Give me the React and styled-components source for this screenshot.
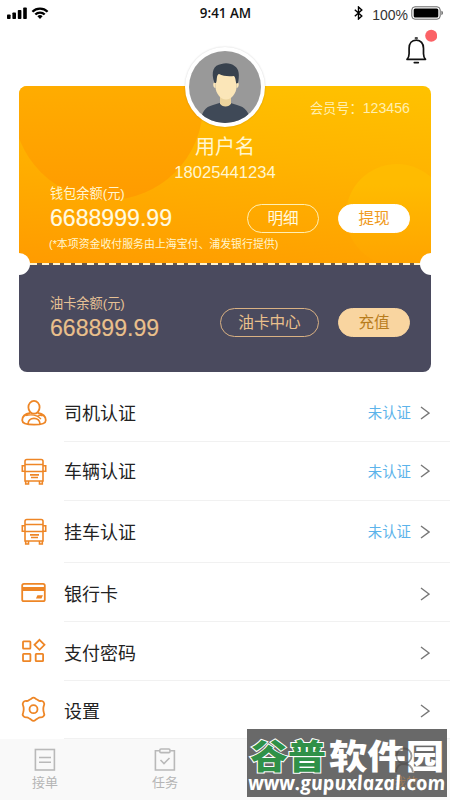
import styled, { createGlobalStyle } from "styled-components";

const rows = [
  { icon: "driver", label: "司机认证", status: "未认证", height: 58 },
  { icon: "truck", label: "车辆认证", status: "未认证", height: 59 },
  { icon: "truck", label: "挂车认证", status: "未认证", height: 62 },
  { icon: "card", label: "银行卡", height: 59, shift: 3 },
  { icon: "grid", label: "支付密码", height: 59, shift: 3 },
  { icon: "gear", label: "设置", height: 58, shift: 3 },
];

const MenuIcon = ({ name }) => {
  switch (name) {
    case "driver":
      return (
        <RowSvg viewBox="0 0 28 28">
          <ellipse cx="14" cy="8.3" rx="5.6" ry="6.4" />
          <path d="M10.4 14C5.800 14.800 2.200 17.400 2.200 21.200c0 3.600 4.600 4.500 11.800 4.500s11.800-.9 11.800-4.500c0-3.800-3.600-6.400-8.200-7.200" />
          <path d="M8 25c0-3.600 2.600-5.700 6-5.700s6 2.100 6 5.700" />
          <path d="M5.500 16.500c5-1.200 11.500-.8 15.500 3.500M17 17.300c1.800-.8 3.800-1.100 5.600-.5" strokeWidth="1.300" />
        </RowSvg>
      );
    case "truck":
      return (
        <RowSvg viewBox="0 0 28 28" $thin>
          <path d="M6.800 1.500h14.400a1.800 1.800 0 0 1 1.800 1.800V23H5V3.300a1.800 1.800 0 0 1 1.800-1.800z" />
          <path d="M5 6.500h18M5 13.500h18" />
          <path d="M10 16.900h9M11 19.500h7" />
          <path d="M5 7.800H2.300v5.400H5M23 7.800h2.700v5.400H23M5.700 23v3h2.800v-3M19.500 23v3h2.800v-3" />
        </RowSvg>
      );
    case "card":
      return (
        <RowSvg viewBox="0 0 28 28">
          <rect x="2.200" y="4.800" width="22.600" height="17.400" rx="1.800" />
          <path d="M2.200 9h22.600M2.200 11h22.600" />
          <path d="M17.400 18.500l.6-1.300h3.500l-.6 1.300z" />
        </RowSvg>
      );
    case "grid":
      return (
        <RowSvg viewBox="0 0 28 28">
          <rect x="3" y="3.300" width="7.400" height="7.400" rx=".6" />
          <path d="M19.500 1.800l5 5-5 5-5-5z" />
          <rect x="3" y="15.800" width="7.400" height="7.400" rx=".6" />
          <rect x="15.700" y="15.800" width="7.400" height="7.400" rx=".6" />
        </RowSvg>
      );
    default:
      return (
        <RowSvg viewBox="0 0 28 28">
          <path d="M10 3.500C11.500 3 11.700 1.600 13.500 1.600s2 1.400 3.500 1.900c1.200.5 1.700 1.500 3 1.500 1.500 0 2.600-.4 3.700 1.200 1.200 1.800.6 2.700.1 3.700-.5 1.200-.5 1.800-.5 3.100s0 2.300.5 3.400c.5 1 1.100 2-.1 3.700-1.100 1.600-2.200 1.200-3.700 1.200-1.300 0-1.800 1-3 1.600-1.500.6-1.700 2-3.500 2s-2-1.400-3.500-2c-1.200-.5-1.700-1.600-3-1.600-1.500 0-2.600.4-3.700-1.200-1.200-1.700-.6-2.700-.1-3.700.5-1.100.5-2.100.5-3.400s0-1.900-.5-3.100c-.5-1-1.100-1.900.1-3.700C4.400 4.600 5.500 5 7 5c1.300 0 1.800-1 3-1.500z" />
          <circle cx="13.500" cy="13.200" r="4" />
        </RowSvg>
      );
  }
};

const Avatar = () => (
  <AvatarRing>
    <svg viewBox="0 0 72 72" width="72" height="72">
      <defs>
        <clipPath id="face">
          <circle cx="36" cy="36" r="36" />
        </clipPath>
      </defs>
      <g clipPath="url(#face)">
        <rect width="72" height="72" fill="#999" />
        <path d="M12 72c0-11 4-16 12-18l8-2.500h8l8 2.500c8 2 13 7 13 18z" fill="#3f4957" />
        <path d="M31 43h11v9.500c-1.500 4-9.500 4-11 0z" fill="#ecd49d" />
        <path d="M26.500 22h21v14c0 6-5 12.500-10.500 12.500S26.500 42 26.500 36z" fill="#fbe6b8" />
        <path d="M26.500 31c-3-.5-3 5.500 0 6M47.500 31c3-.5 3 5.500 0 6" fill="#fbe6b8" />
        <path d="M25.500 32c-4-11-1-18 7-19 4-1.600 10-.8 13 2 5 3 5 10 3.500 17l-1.800.5c-.7-3-.4-5.500-2.200-7.500-5 .5-11 .3-15-2-3 1-1.500 6-3 9z" fill="#38424e" />
      </g>
    </svg>
  </AvatarRing>
);

const StatusIcons = () => (
  <svg width="43" height="14" viewBox="0 0 43 14">
    <g fill="#000">
      <rect x="0" y="8.500" width="3.600" height="4.500" rx=".8" />
      <rect x="5.400" y="6.500" width="3.600" height="6.500" rx=".8" />
      <rect x="10.800" y="4" width="3.600" height="9" rx=".8" />
      <rect x="16.200" y="1.500" width="3.600" height="11.500" rx=".8" />
      <path d="M33 13l-2.600-2.700a3.800 3.800 0 0 1 5.200 0z" />
    </g>
    <path d="M25.400 5.700a10.800 10.800 0 0 1 15.200 0M28.300 8.500a6.600 6.600 0 0 1 9.400 0" fill="none" stroke="#000" strokeWidth="2.300" />
  </svg>
);

const Watermark = () => (
  <Stamp>
    <svg width="200" height="68" viewBox="0 0 200 68">
      <StampMine x="147" y="58">我的</StampMine>
      <StampTitle x="3" y="40" textLength="76" lengthAdjust="spacingAndGlyphs" $green>谷普</StampTitle>
      <StampTitle x="82" y="40" textLength="115" lengthAdjust="spacingAndGlyphs">软件园</StampTitle>
      <g fill="none" stroke="#4b4744" strokeWidth="1.800" opacity=".55">
        <circle cx="157" cy="27" r="7.500" />
        <path d="M149 43c1-6 3-8 8-8s8 2 9 8" />
      </g>
      <g transform="translate(1 61) skewX(8)">
        <StampUrl x="1" y="0" textLength="197" lengthAdjust="spacingAndGlyphs">www.gupuxlazal.com</StampUrl>
      </g>
    </svg>
  </Stamp>
);

const App = () => {
  return (
    <>
      <GlobalStyle />
      <Page>
        <StatusBar>
          <StatusIcons />
          <Clock>9:41 AM</Clock>
          <Power>
            <svg width="9" height="14" viewBox="0 0 9 14">
              <path d="M.8 3.800l7 6.200-3.300 3V1l3.300 3-7 6.200" fill="none" stroke="#000" strokeWidth="1.400" />
            </svg>
            <Percent>100%</Percent>
            <svg width="33" height="14" viewBox="0 0 33 14">
              <rect x=".8" y=".8" width="28.400" height="12.400" rx="3.200" fill="#fff" stroke="#666" />
              <rect x="2.700" y="2.500" width="24.600" height="9" rx="1.500" fill="#000" />
              <path d="M30.500 4.800c1.700.4 1.700 4 0 4.400z" fill="#444" />
            </svg>
          </Power>
        </StatusBar>
        <TopBar>
          <svg width="36" height="36" viewBox="0 0 36 36">
            <g fill="none" stroke="#111" strokeWidth="1.700" strokeLinecap="round">
              <path d="M6 30.300h18.500c-1.400-1.400-2-3.100-2-5.500v-5.500c0-4.800-2.800-8.200-7.200-8.200s-7.200 3.400-7.200 8.200v5.500c0 2.400-.7 4.100-2.100 5.500z" strokeLinejoin="round" />
              <path d="M14.500 9h1.600M13.300 33.600h4" />
            </g>
            <circle cx="30.200" cy="6.800" r="6" fill="#fb6266" />
          </svg>
        </TopBar>

        <Card>
          <Avatar />
          <Wallet>
            <Bubble $x={-6} $y={-76} $size={190} $from="#ffb200" $to="#ff9b00" />
            <Bubble $x={327} $y={78} $size={102} $from="#ffbb00" $to="#ffa300" />
            <MemberNo>
              会员号：<b>123456</b>
            </MemberNo>
            <UserName>用户名</UserName>
            <Phone>18025441234</Phone>
            <Caption>钱包余额(元)</Caption>
            <MoneyRow>
              <Amount>6688999.99</Amount>
              <Pill $w={72}>明细</Pill>
              <Pill $w={72} $fill="#fff" $text="#f09a1c">提现</Pill>
            </MoneyRow>
            <Note>(*本项资金收付服务由上海宝付、浦发银行提供)</Note>
          </Wallet>
          <TearLine />
          <OilCard>
            <Balance>
              <Caption $tan>油卡余额(元)</Caption>
              <Amount $tan>668899.99</Amount>
            </Balance>
            <Pill $w={99} $tan>油卡中心</Pill>
            <Pill $w={72} $fill="#f9d5a0" $text="#b87c1c">充值</Pill>
          </OilCard>
          <Notch $side="left" />
          <Notch $side="right" />
        </Card>

        <Menu>
          {rows.map((row) => (
            <Row key={row.label} $h={row.height}>
              <MenuIcon name={row.icon} />
              <RowBody $shift={row.shift}>
                <RowLabel>{row.label}</RowLabel>
                {row.status && <RowStatus>{row.status}</RowStatus>}
                <svg width="10" height="14" viewBox="0 0 10 14">
                  <path d="M1 1l8 6-8 6" fill="none" stroke="#777" strokeWidth="1.400" />
                </svg>
              </RowBody>
            </Row>
          ))}
        </Menu>

        <TabBar>
          <Tab>
            <svg width="22" height="24" viewBox="0 0 22 24" fill="none" stroke="#b9b9b9" strokeWidth="1.600">
              <rect x="1.400" y="1.500" width="19" height="20.500" />
              <path d="M5 9.500h12M5 14.300h12" />
            </svg>
            接单
          </Tab>
          <Tab>
            <svg width="22" height="24" viewBox="0 0 22 24" fill="none" stroke="#b9b9b9" strokeWidth="1.600">
              <path d="M5.500 2.800H1.400V22h19V2.800h-4.100" />
              <rect x="5.800" y="1" width="10.200" height="3.600" rx="1.200" />
              <path d="M6.500 12l3.500 3.500 5.500-5.500" />
            </svg>
            任务
          </Tab>
        </TabBar>
        <Watermark />
      </Page>
    </>
  );
};
export default App;

const GlobalStyle = createGlobalStyle`
  * { box-sizing: border-box; }
  body {
    margin: 0;
    background: #fff;
    font-family: "Liberation Sans", "Noto Sans CJK SC", sans-serif;
  }
  svg { display: block; flex: none; }
`;

const Page = styled.div`
  position: relative;
  width: 450px;
  height: 800px;
  overflow: hidden;
  display: flex;
  flex-direction: column;
  background: #fff;
`;

const StatusBar = styled.div`
  display: grid;
  grid-template-columns: 1fr auto 1fr;
  align-items: center;
  height: 26px;
  padding: 0 6px 0 7px;
`;

const Clock = styled.span`
  font-family: "Open Sans", sans-serif;
  font-size: 13.400px;
  font-weight: 600;
  color: #111;
`;

const Power = styled.div`
  display: flex;
  justify-content: flex-end;
  align-items: center;
`;

const Percent = styled.span`
  margin: 4px 3px 0 9px;
  font-size: 14px;
  line-height: 16px;
  color: #333;
`;

const TopBar = styled.div`
  display: flex;
  justify-content: flex-end;
  height: 60px;
  padding: 3px 13px 0 0;
`;

const Card = styled.section`
  position: relative;
  width: 412px;
  height: 286px;
  flex: none;
  margin: 0 19px;
  display: flex;
  flex-direction: column;
`;

const AvatarRing = styled.div`
  position: absolute;
  z-index: 2;
  top: -39px;
  left: 166px;
  padding: 4px;
  border-radius: 50%;
  background: #fff;
  box-shadow: 0 0 2px rgba(0, 0, 0, 0.18);
`;

const Wallet = styled.div`
  position: relative;
  height: 177px;
  overflow: hidden;
  display: flex;
  flex-direction: column;
  padding: 12px 21px 0 31px;
  border-radius: 8px 8px 0 0;
  background: linear-gradient(186deg, #ffc200 0%, #ffb400 40%, #ff9b00 100%);
  color: #fff6cf;

  > * { position: relative; }
`;

const Bubble = styled.div`
  && { position: absolute; }
  left: ${(props) => props.$x}px;
  top: ${(props) => props.$y}px;
  width: ${(props) => props.$size}px;
  height: ${(props) => props.$size}px;
  border-radius: 50%;
  background: linear-gradient(${(props) => props.$from} 20%, ${(props) => props.$to});
`;

const MemberNo = styled.div`
  align-self: flex-end;
  font-size: 13.2px;
  line-height: 20px;
  color: #ffefb0;

  b {
    font-size: 14.2px;
    font-weight: 400;
  }
`;

const UserName = styled.div`
  margin: 14px 0 0 -10px;
  text-align: center;
  font-size: 20px;
  line-height: 28px;
`;

const Phone = styled.div`
  margin: 0 0 0 -10px;
  text-align: center;
  font-size: 16.6px;
  line-height: 24px;
`;

const Caption = styled.div`
  font-size: 13.2px;
  line-height: 18px;
  color: ${(props) => (props.$tan ? "#e6c195" : "inherit")};
`;

const MoneyRow = styled.div`
  display: flex;
  align-items: center;
  height: 31px;
  margin-bottom: 2px;
`;

const Amount = styled.div`
  flex: 1;
  margin-top: -1px;
  font-size: 23.100px;
  line-height: 28px;
  color: ${(props) => (props.$tan ? "#eac08c" : "#fffbe0")};
  -webkit-text-stroke: 0.15px;
`;

const Pill = styled.button`
  width: ${(props) => props.$w}px;
  height: 29px;
  margin-left: 19px;
  padding: 0;
  border: 1.500px solid ${(props) => props.$fill || (props.$tan ? "#d9b183" : "#fff0b4")};
  border-radius: 15px;
  background: ${(props) => props.$fill || "transparent"};
  color: ${(props) => props.$text || (props.$tan ? "#eac08c" : "#fffbe0")};
  font-family: inherit;
  font-size: 15.6px;
  line-height: 24px;
`;

const Note = styled.div`
  margin-left: -1px;
  font-size: 10.900px;
  line-height: 16px;
  white-space: nowrap;
`;

const TearLine = styled.div`
  height: 2px;
  background: repeating-linear-gradient(90deg, #fff3cf 0 7px, #6a5a4c 7px 11.300px);
`;

const OilCard = styled.div`
  flex: 1;
  display: flex;
  align-items: flex-start;
  padding: 43px 21px 0 31px;
  border-radius: 0 0 8px 8px;
  background: #4a4a5e;
`;

const Balance = styled.div`
  flex: 1;
  margin-top: -13px;

  ${Caption} { margin-bottom: 2px; }
`;

const Notch = styled.i`
  position: absolute;
  top: 167px;
  ${(props) => props.$side}: -11px;
  width: 22px;
  height: 22px;
  border-radius: 50%;
  background: #fff;
`;

const Menu = styled.ul`
  margin: 12px 0 0;
  padding: 0;
  list-style: none;
`;

const Row = styled.li`
  display: flex;
  align-items: center;
  height: ${(props) => props.$h}px;
  padding-left: 20px;
`;

const RowSvg = styled.svg`
  width: 28px;
  height: 28px;
  fill: none;
  stroke: #ee8626;
  stroke-width: ${(props) => (props.$thin ? 1.6 : 1.8)};
`;

const RowBody = styled.div`
  flex: 1;
  align-self: stretch;
  display: flex;
  align-items: center;
  margin-left: 16px;
  padding: ${(props) => props.$shift || 0}px 20px 0 0;
  border-bottom: 1px solid #f1f1f1;
`;

const RowLabel = styled.span`
  flex: 1;
  margin-top: -2px;
  font-size: 18px;
  color: #222;
`;

const RowStatus = styled.span`
  margin: -2px 9px 0 0;
  font-size: 14.400px;
  color: #5cb3ea;
`;

const TabBar = styled.nav`
  display: grid;
  grid-template-columns: repeat(4, 120px);
  height: 61px;
  margin: 0 -15px;
  padding-top: 9px;
  background: #f9f9f9;
`;

const Tab = styled.div`
  display: flex;
  flex-direction: column;
  align-items: center;
  gap: 1px;
  font-size: 13px;
  line-height: 20px;
  color: #b5b5b5;
`;

const Stamp = styled.div`
  position: absolute;
  left: 247px;
  top: 729px;
  background: #696969;
`;

const StampTitle = styled.text`
  font-family: "Noto Sans CJK SC", sans-serif;
  font-size: 34px;
  font-weight: 900;
  fill: ${(props) => (props.$green ? "#2f9148" : "#fff")};
  stroke: #fff;
  stroke-width: ${(props) => (props.$green ? 2 : 0)};
  paint-order: stroke;
`;

const StampMine = styled.text`
  font-size: 12px;
  fill: #a07b58;
`;

const StampUrl = styled.text`
  font-family: "Open Sans", sans-serif;
  font-size: 20px;
  font-weight: 700;
  font-style: italic;
  fill: #fff;
`;
